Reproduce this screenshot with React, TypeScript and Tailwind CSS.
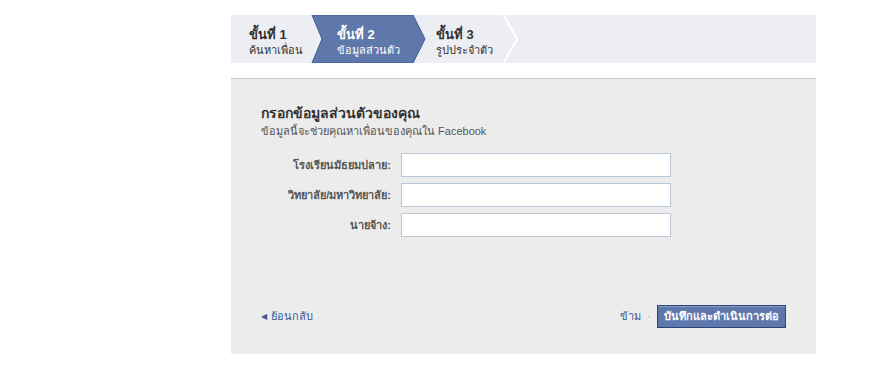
const font = { fontFamily: 'Tahoma, "Liberation Sans", "DejaVu Sans", "Noto Sans", sans-serif' };

type Step = {
  title: string;
  label: string;
};

const steps: Step[] = [
  { title: "ขั้นที่ 1", label: "ค้นหาเพื่อน" },
  { title: "ขั้นที่ 2", label: "ข้อมูลส่วนตัว" },
  { title: "ขั้นที่ 3", label: "รูปประจำตัว" },
];

const fields = ["โรงเรียนมัธยมปลาย:", "วิทยาลัย/มหาวิทยาลัย:", "นายจ้าง:"];

function StepBar() {
  return (
    <div className="relative flex h-[48px] w-[585px] bg-[#eceef3]">
      {/* active chevron + separator drawn behind the labels */}
      <svg
        className="absolute left-0 top-0"
        width="585"
        height="48"
        viewBox="0 0 585 48"
        aria-hidden="true"
      >
        <polygon
          points="81,0 182,0 194,24 182,48 81,48 91,24"
          fill="#5f78ab"
          stroke="#3f5a8f"
          strokeWidth="1"
        />
        <polyline points="272,-1 286,24 272,49" fill="none" stroke="#ffffff" strokeWidth="2" />
      </svg>
      <div className="relative flex items-start pt-[12px]">
        <div className="w-[81px] pl-[18px]">
          <div className="text-[13px] font-bold leading-[16px] text-[#333]">{steps[0].title}</div>
          <div className="text-[11px] leading-[14px] text-[#333]">{steps[0].label}</div>
        </div>
        <div className="w-[106px] pl-[25px]">
          <div className="text-[13px] font-bold leading-[16px] text-white">{steps[1].title}</div>
          <div className="text-[11px] leading-[14px] text-white">{steps[1].label}</div>
        </div>
        <div className="pl-[18px]">
          <div className="text-[13px] font-bold leading-[16px] text-[#333]">{steps[2].title}</div>
          <div className="text-[11px] leading-[14px] text-[#333]">{steps[2].label}</div>
        </div>
      </div>
    </div>
  );
}

export default function App() {
  return (
    <div className="min-h-[384px] bg-white" style={font}>
      <div className="ml-[231px] w-[585px] pt-[15px]">
        <StepBar />
        <div className="mt-[15px] h-[276px] border-t border-[#cccccc] bg-[#ececec] px-[30px] pt-[25px]">
          <h1 className="text-[14px] font-bold leading-[18px] text-[#333]">กรอกข้อมูลส่วนตัวของคุณ</h1>
          <p className="mt-[1px] text-[11px] leading-[16px] text-[#555]">ข้อมูลนี้จะช่วยคุณหาเพื่อนของคุณใน Facebook</p>

          <div className="mt-[14px] flex flex-col gap-[6px]">
            {fields.map((f) => (
              <div key={f} className="flex items-center">
                <label className="w-[140px] pr-[10px] text-right text-[11px] font-bold text-[#555]">{f}</label>
                <input
                  type="text"
                  className="h-[24px] w-[270px] border border-[#bdc7d8] bg-white px-1 text-[11px] outline-none"
                />
              </div>
            ))}
          </div>

          <div className="mt-[68px] flex items-center justify-between">
            <a href="#" className="flex items-center gap-[4px] text-[11px] text-[#3b5998]">
              <span className="text-[8px]">◀</span>
              ย้อนกลับ
            </a>
            <div className="flex items-center">
              <a href="#" className="text-[11px] text-[#3b5998]">ข้าม</a>
              <span className="mx-[6px] text-[11px] text-[#999]">·</span>
              <button
                type="button"
                className="h-[23px] border border-[#29447e] bg-[#5f78ab] px-[6px] text-[11px] font-bold text-white shadow-[inset_0_1px_0_#8a9cc2]"
              >
                บันทึกและดำเนินการต่อ
              </button>
            </div>
          </div>
        </div>
      </div>
    </div>
  );
}
